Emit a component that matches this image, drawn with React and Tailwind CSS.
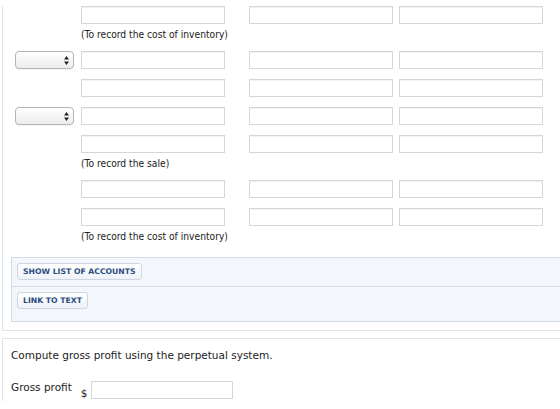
import React from "react";

const inputCls =
  "h-[18px] w-[144px] border border-[#d6d6d6] bg-white shadow-[inset_0_1px_1px_rgba(0,0,0,0.06)]";

function Select() {
  return (
    <div className="relative h-[18px] w-[59px] rounded-[4px] border border-[#b5b5b5] bg-gradient-to-b from-white to-[#ececec] shadow-[0_1px_0_rgba(0,0,0,0.04)]">
      <svg
        className="absolute right-[4px] top-[4px]"
        width="5"
        height="9"
        viewBox="0 0 5 9"
      >
        <path d="M2.5 0 L5 3.5 L0 3.5 Z" fill="#222" />
        <path d="M2.5 9 L5 5.5 L0 5.5 Z" fill="#222" />
      </svg>
    </div>
  );
}

function Row({ select }) {
  return (
    <div className="mt-[10px] flex h-[18px] items-center first:mt-[6px]">
      <div className="w-[59px]">{select ? <Select /> : null}</div>
      <div className={`ml-[7px] ${inputCls}`} />
      <div className={`ml-[24px] ${inputCls}`} />
      <div className={`ml-[6px] ${inputCls}`} />
    </div>
  );
}

function Note({ children }) {
  return (
    <div className="ml-[66px] h-[17px] pt-[4px] font-['DejaVu_Sans_Condensed','DejaVu_Sans',sans-serif] text-[10.2px] leading-[13px] text-[#222]">
      {children}
    </div>
  );
}

function AccountButton({ children }) {
  return (
    <button className="h-[17px] rounded-[3px] border border-[#cdd6e2] bg-gradient-to-b from-white to-[#eef2f7] px-[5px] text-[7.7px] font-bold leading-[15px] text-[#2b4c80]">
      {children}
    </button>
  );
}

export default function App() {
  return (
    <div className="h-[409px] w-[560px] overflow-hidden bg-white font-['DejaVu_Sans',sans-serif]">
      {/* journal entry panel */}
      <div className="ml-[2px] w-[600px] border-b border-l border-[#dbe2ea] pb-[8px] pl-[12px]">
        <Row />
        <Note>(To record the cost of inventory)</Note>
        <Row select />
        <Row />
        <Row select />
        <Row />
        <Note>(To record the sale)</Note>
        <Row />
        <Row />
        <Note>(To record the cost of inventory)</Note>

        <div className="ml-[-4px] mt-[14px] border border-[#d3dbe5] bg-[#f3f7fb]">
          <div className="flex border-b border-[#d3dbe5] px-[5px] pt-[5px] pb-[6px]">
            <AccountButton>SHOW LIST OF ACCOUNTS</AccountButton>
          </div>
          <div className="flex px-[5px] pt-[5px] pb-[12px]">
            <AccountButton>LINK TO TEXT</AccountButton>
          </div>
        </div>
      </div>

      {/* gross profit question */}
      <div className="ml-[2px] mt-[7px] w-[600px] border-l border-t border-[#dbe2ea] pl-[8px] pt-[9px] text-[#222]">
        <div className="text-[10.5px] leading-[15px]">
          Compute gross profit using the perpetual system.
        </div>
        <div className="mt-[17px] flex items-start">
          <span className="text-[10.5px] leading-[15px]">Gross profit</span>
          <span className="ml-[9px] mt-[6px] text-[10.5px] leading-[15px]">$</span>
          <div className="ml-[3px] mt-[1px] h-[18px] w-[142px] border border-[#d6d6d6] bg-white" />
        </div>
      </div>
    </div>
  );
}
